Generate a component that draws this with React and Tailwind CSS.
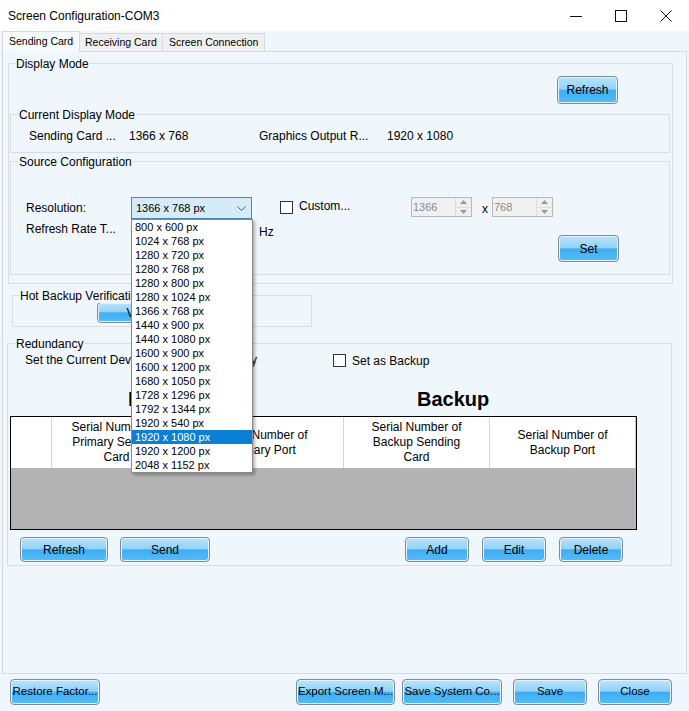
import { useState } from 'react';

const RESOLUTIONS = [
  '800 x 600 px',
  '1024 x 768 px',
  '1280 x 720 px',
  '1280 x 768 px',
  '1280 x 800 px',
  '1280 x 1024 px',
  '1366 x 768 px',
  '1440 x 900 px',
  '1440 x 1080 px',
  '1600 x 900 px',
  '1600 x 1200 px',
  '1680 x 1050 px',
  '1728 x 1296 px',
  '1792 x 1344 px',
  '1920 x 540 px',
  '1920 x 1080 px',
  '1920 x 1200 px',
  '2048 x 1152 px',
];

// Blue glossy button used across the dialog
function Btn({ className = '', children }) {
  return (
    <div
      className={
        'flex items-center justify-center whitespace-nowrap overflow-hidden rounded-[4px] border border-[#7f8b93] bg-[linear-gradient(to_bottom,#b9e3fc_0%,#92d2f8_46%,#3eaef4_52%,#54bcf7_100%)] shadow-[inset_0_0_0_1px_#e4f4fe] text-black ' +
        className
      }
    >
      {children}
    </div>
  );
}

function Legend({ className = '', children }) {
  return (
    <span className={'absolute -top-[7px] px-[1px] leading-[14px] bg-[#f0f7fc] whitespace-nowrap ' + className}>
      {children}
    </span>
  );
}

function Checkbox({ className = '' }) {
  return <div className={'w-[13px] h-[13px] border border-[#333] bg-white ' + className} />;
}

function SpinBox({ value }) {
  return (
    <div className="flex w-[61px] h-[20px] border border-[#b9b9b9] bg-[#f0f0f0]">
      <span className="flex-1 pl-[1px] leading-[18px] text-[11px] text-[#8a8a8a]">{value}</span>
      <div className="flex flex-col w-[16px] border-l border-[#dcdcdc]">
        <div className="flex-1 flex items-center justify-center border-b border-[#dcdcdc]">
          <svg width="7" height="4" viewBox="0 0 7 4"><path d="M0 4 L3.5 0 L7 4 Z" fill="#9a9a9a" /></svg>
        </div>
        <div className="flex-1 flex items-center justify-center">
          <svg width="7" height="4" viewBox="0 0 7 4"><path d="M0 0 L3.5 4 L7 0 Z" fill="#9a9a9a" /></svg>
        </div>
      </div>
    </div>
  );
}

function ResolutionCombo() {
  const [selected] = useState('1920 x 1080 px');
  return (
    <div className="relative w-[121px] h-[22px] border border-[#4f86b3] bg-[#d6ebf8]">
      <span className="pl-[4px] leading-[20px] text-[11px]">1366 x 768 px</span>
      <svg className="absolute right-[5px] top-[8px]" width="9" height="5" viewBox="0 0 9 5">
        <path d="M0.5 0.5 L4.5 4.5 L8.5 0.5" fill="none" stroke="#555" strokeWidth="1" />
      </svg>
      {/* open drop-down list */}
      <div className="absolute z-10 left-[-1px] top-[21px] w-[122px] border border-[#8a8a8a] bg-white shadow-[2px_2px_3px_rgba(0,0,0,0.3)]">
        {RESOLUTIONS.map((r) => (
          <div
            key={r}
            className={
              r === selected
                ? 'h-[14px] leading-[14px] pl-[3px] text-[11px] bg-[#0a80d4] text-white'
                : 'h-[14px] leading-[14px] pl-[3px] text-[11px] text-black'
            }
          >
            {r}
          </div>
        ))}
      </div>
    </div>
  );
}

function HeaderCell({ className = '', children }) {
  return (
    <div className={'flex items-center justify-center text-center leading-[15px] border-r border-[#d4d4d4] ' + className}>
      {children}
    </div>
  );
}

export default function App() {
  return (
    <div
      className="w-[689px] h-[711px] overflow-hidden bg-[#f0f7fc] text-[12px] text-black"
      style={{ fontFamily: '"Liberation Sans", Arial, sans-serif' }}
    >
      {/* Title bar */}
      <div className="flex items-center h-[31px] bg-white">
        <span className="pl-[8px] text-[12px]">Screen Configuration-COM3</span>
        <div className="ml-auto mr-[1px] flex h-full">
          <div className="w-[45px] flex items-center justify-center">
            <svg width="12" height="12" viewBox="0 0 12 12"><path d="M0 6.5 H12" stroke="#111" strokeWidth="1" /></svg>
          </div>
          <div className="w-[45px] flex items-center justify-center">
            <svg width="12" height="12" viewBox="0 0 12 12"><rect x="0.5" y="0.5" width="11" height="11" fill="none" stroke="#111" strokeWidth="1" /></svg>
          </div>
          <div className="w-[45px] flex items-center justify-center">
            <svg width="12" height="12" viewBox="0 0 12 12"><path d="M0.5 0.5 L11.5 11.5 M11.5 0.5 L0.5 11.5" stroke="#111" strokeWidth="1" /></svg>
          </div>
        </div>
      </div>

      {/* Tabs */}
      <div className="flex items-end h-[20px] px-[2px] text-[10.5px]">
        <div className="relative z-10 -mb-px h-[21px] w-[78px] flex items-center pl-[6px] pb-[1px] border border-b-0 border-[#d9d9d9] bg-[#f5fafd]">
          Sending Card
        </div>
        <div className="h-[18px] w-[83px] flex items-center pl-[5px] border border-l-0 border-b-0 border-[#d9d9d9] bg-[#f0f0f0]">
          Receiving Card
        </div>
        <div className="h-[18px] w-[102px] flex items-center pl-[6px] border border-l-0 border-b-0 border-[#d9d9d9] bg-[#f0f0f0]">
          Screen Connection
        </div>
      </div>

      {/* Tab page */}
      <div className="mx-[2px] h-[623px] border border-[#d9d9d9] bg-[#f0f7fc] flex flex-col items-start">
        {/* Display Mode */}
        <div className="relative mt-[11px] ml-[5px] w-[665px] h-[221px] border border-[#d8dde0] flex flex-col items-start">
          <Legend className="left-[6px]">Display Mode</Legend>
          <Btn className="mt-[12px] ml-[548px] w-[61px] h-[28px]">Refresh</Btn>

          {/* Current Display Mode */}
          <div className="relative mt-[10px] ml-[1px] w-[660px] h-[39px] border border-[#d8dde0]">
            <Legend className="left-[7px]">Current Display Mode</Legend>
            <div className="flex mt-[14px] pl-[18px] leading-[14px]">
              <span className="w-[100px]">Sending Card ...</span>
              <span className="w-[130px]">1366 x 768</span>
              <span className="w-[128px]">Graphics Output R...</span>
              <span>1920 x 1080</span>
            </div>
          </div>

          {/* Source Configuration */}
          <div className="relative mt-[8px] ml-[1px] w-[660px] h-[114px] border border-[#d8dde0]">
            <Legend className="left-[7px]">Source Configuration</Legend>
            <div className="flex items-start mt-[35px] pl-[15px] h-[22px]">
              <span className="w-[105px] leading-[22px]">Resolution:</span>
              <ResolutionCombo />
              <Checkbox className="ml-[28px] mt-[4px]" />
              <span className="ml-[6px] w-[112px] mt-[2px] leading-[14px]">Custom...</span>
              <SpinBox value="1366" />
              <span className="w-[20px] pl-[10px] mt-[5px] leading-[14px]">x</span>
              <SpinBox value="768" />
            </div>
            <div className="flex items-start mt-[2px] pl-[15px]">
              <span className="w-[105px] mt-[1px] leading-[14px]">Refresh Rate T...</span>
              <div className="w-[121px] h-[22px]" />
              <span className="ml-[7px] mt-[4px] leading-[14px]">Hz</span>
              <Btn className="ml-auto mr-[50px] mt-[14px] w-[61px] h-[27px]">Set</Btn>
            </div>
          </div>
        </div>

        {/* Hot Backup Verification */}
        <div className="relative mt-[11px] ml-[9px] w-[300px] h-[32px] border border-[#d8dde0]">
          <Legend className="left-[6px]">Hot Backup Verification</Legend>
          <Btn className="mt-[6px] ml-[84px] w-[89px] h-[21px]">Verify</Btn>
        </div>

        {/* Redundancy */}
        <div className="relative mt-[16px] ml-[4px] w-[665px] h-[223px] border border-[#d8dde0] flex flex-col items-start">
          <Legend className="left-[7px]">Redundancy</Legend>
          <div className="flex items-start mt-[9px] pl-[17px]">
            <span className="w-[308px] leading-[14px]">Set the Current Device as Backup Manually</span>
            <Checkbox className="mt-[1px]" />
            <span className="ml-[6px] leading-[14px] mt-[1px]">Set as Backup</span>
          </div>
          <div className="flex mt-[19px] pl-[120px] text-[20px] font-bold leading-[24px]">
            <span className="w-[289px]">Primary</span>
            <span>Backup</span>
          </div>

          {/* Table */}
          <div className="mt-[5px] ml-[2px] w-[627px] h-[114px] border border-black bg-[#b3b3b3] flex flex-col">
            <div className="flex h-[51px] bg-white">
              <HeaderCell className="w-[41px]" />
              <HeaderCell className="w-[130px]">
                Serial Number of
                <br />
                Primary Sending
                <br />
                Card
              </HeaderCell>
              <HeaderCell className="w-[162px]">
                Serial Number of
                <br />
                Primary Port
              </HeaderCell>
              <HeaderCell className="w-[146px]">
                Serial Number of
                <br />
                Backup Sending
                <br />
                Card
              </HeaderCell>
              <HeaderCell className="w-[146px] border-r-[#c8c8c8]">
                Serial Number of
                <br />
                Backup Port
              </HeaderCell>
            </div>
          </div>

          <div className="flex mt-[7px] pl-[12px]">
            <Btn className="w-[88px] h-[25px]">Refresh</Btn>
            <Btn className="ml-[12px] w-[90px] h-[25px]">Send</Btn>
            <Btn className="ml-[195px] w-[64px] h-[25px]">Add</Btn>
            <Btn className="ml-[13px] w-[64px] h-[25px]">Edit</Btn>
            <Btn className="ml-[13px] w-[64px] h-[25px]">Delete</Btn>
          </div>
        </div>
      </div>

      {/* Bottom buttons */}
      <div className="flex mt-[5px] pl-[10px] text-[11.5px]">
        <Btn className="w-[90px] h-[26px] text-[11.5px]">Restore Factor...</Btn>
        <Btn className="ml-[196px] w-[99px] h-[26px] text-[11.5px]">Export Screen M...</Btn>
        <Btn className="ml-[7px] w-[100px] h-[26px] text-[11.5px]">Save System Co...</Btn>
        <Btn className="ml-[11px] w-[74px] h-[26px] text-[11.5px]">Save</Btn>
        <Btn className="ml-[11px] w-[74px] h-[26px] text-[11.5px]">Close</Btn>
      </div>
    </div>
  );
}
